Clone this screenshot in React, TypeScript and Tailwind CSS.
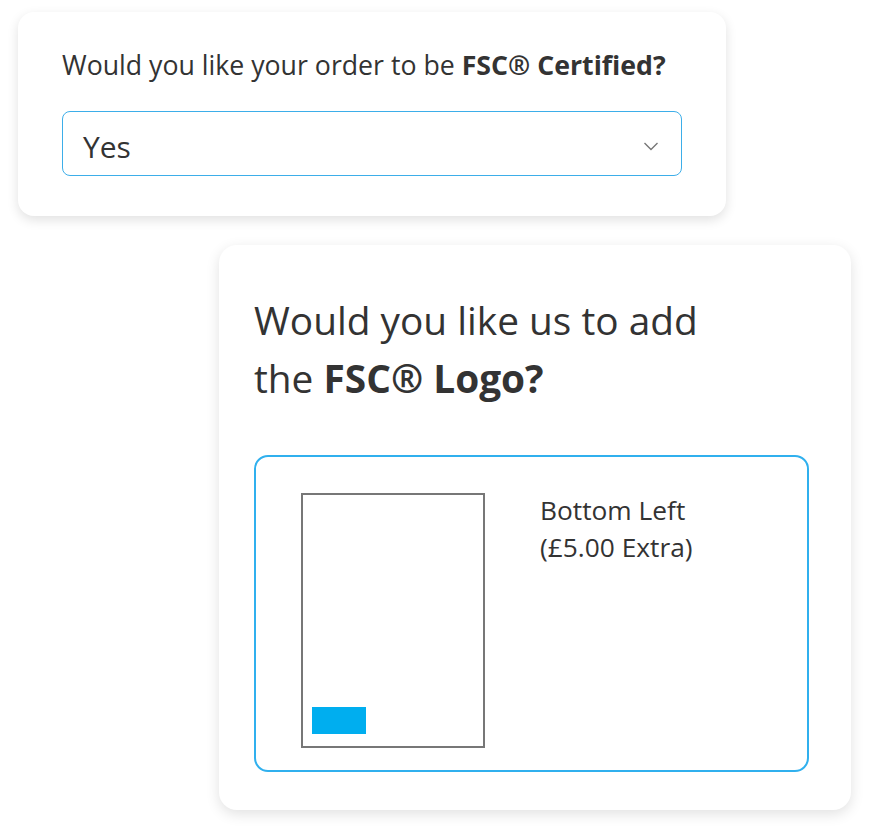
export default function App() {
  return (
    <div
      className="w-[870px] h-[835px] bg-white flex flex-col text-[#333333]"
      style={{ fontFamily: '"Open Sans", sans-serif' }}
    >
      {/* FSC certified question */}
      <div className="ml-[18px] mt-[12px] w-[708px] h-[204px] rounded-[16px] bg-white shadow-[0_4px_12px_rgba(0,0,0,0.12)] pl-[44px] pr-[44px] pt-[34px]">
        <p className="text-[26.7px] leading-[38px]">
          Would you like your order to be <span className="font-bold">FSC® Certified?</span>
        </p>
        <div className="mt-[27px] h-[65px] w-[620px] rounded-[8px] border-[1.5px] border-[#3daee9] flex items-center justify-between pl-[20px] pr-[23px]">
          <span className="text-[30px] leading-[40px] pt-[6px]">Yes</span>
          <svg width="14" height="9" viewBox="0 0 14 9" fill="none" className="mt-[6px]">
            <polyline points="0.5,1 7,7.5 13.5,1" stroke="#777777" strokeWidth="1.4" />
          </svg>
        </div>
      </div>

      {/* FSC logo option */}
      <div className="ml-[219px] mt-[29px] w-[632px] h-[565px] rounded-[18px] bg-white shadow-[0_4px_14px_rgba(0,0,0,0.12)] pl-[35px] pr-[42px] pt-[46px]">
        <h2 className="text-[38.8px] leading-[58px]">
          Would you like us to add
          <br />
          the <span className="font-bold">FSC® Logo?</span>
        </h2>
        <div className="mt-[48px] h-[317px] w-[555px] rounded-[14px] border-2 border-[#30b0ee] flex pl-[45px] pt-[36px]">
          <div className="w-[184px] h-[255px] border-2 border-[#777777] flex items-end pl-[9px] pb-[12px]">
            <div className="w-[54px] h-[27px] bg-[#00aeef]" />
          </div>
          <div className="ml-[55px] -mt-[1px] text-[26.3px] leading-[37px]">
            <p>Bottom Left</p>
            <p>(£5.00 Extra)</p>
          </div>
        </div>
      </div>
    </div>
  )
}
